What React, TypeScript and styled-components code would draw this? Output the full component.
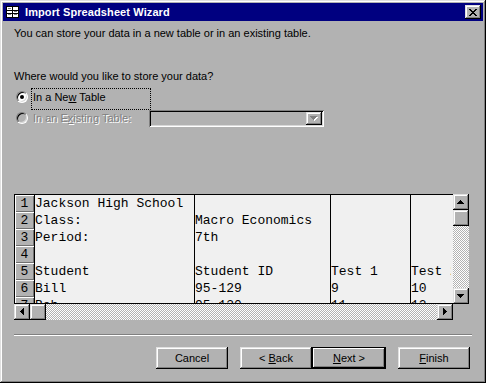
import React from 'react';
import styled, { createGlobalStyle, css } from 'styled-components';

const GRAY = '#b2b2b2';

const Global = createGlobalStyle`
  html, body { margin: 0; padding: 0; background: ${GRAY}; }
  #root { width: 486px; height: 383px; }
`;

const bevelOut = css`
  box-shadow: inset -1px -1px #000, inset 1px 1px #e0e0e0, inset -2px -2px #808080, inset 2px 2px #fff;
`;

const Window = styled.div`
  width: 486px;
  height: 383px;
  box-sizing: border-box;
  padding: 3px;
  background: ${GRAY};
  ${bevelOut}
  display: flex;
  flex-direction: column;
  font-family: "Liberation Sans", Arial, sans-serif;
  font-size: 11px;
  color: #000;
`;

const TitleBar = styled.div`
  height: 18px;
  flex: none;
  background: #000080;
  display: flex;
  align-items: center;
  padding: 0 2px 0 3px;
`;

const TitleIconBox = styled.svg`
  width: 13px;
  height: 12px;
  flex: none;
  margin-right: 6px;
`;

const TitleText = styled.span`
  color: #fff;
  font-weight: bold;
  font-size: 11px;
  flex: 1;
  letter-spacing: 0.1px;
`;

const CloseButton = styled.div`
  width: 16px;
  height: 14px;
  background: ${GRAY};
  ${bevelOut}
  display: flex;
  align-items: center;
  justify-content: center;
`;

const Body = styled.div`
  flex: 1;
  display: flex;
  flex-direction: column;
  padding: 0 13px 0 11px;
`;

const Line = styled.div<{ $top: number }>`
  margin-top: ${p => p.$top}px;
  line-height: 13px;
  height: 13px;
  white-space: nowrap;
`;

const OptionRow = styled.div<{ $h: number; $top?: number }>`
  display: flex;
  align-items: flex-start;
  height: ${p => p.$h}px;
  margin-top: ${p => p.$top ?? 0}px;
  padding-left: 2px;
`;

const Radio = styled.div<{ $checked?: boolean; $disabled?: boolean; $top: number }>`
  width: 12px;
  height: 12px;
  box-sizing: border-box;
  margin-top: ${p => p.$top}px;
  border-radius: 50%;
  border: 1px solid;
  border-color: #808080 #fff #fff #808080;
  background: ${p => (p.$disabled ? GRAY : '#fff')};
  box-shadow: inset 1px 1px #000, inset -1px -1px #d8d8d8;
  display: flex;
  align-items: center;
  justify-content: center;
  flex: none;
  &::after {
    content: '';
    display: ${p => (p.$checked ? 'block' : 'none')};
    width: 4px;
    height: 4px;
    border-radius: 50%;
    background: #000;
  }
`;

const OptionLabel = styled.div<{ $focused?: boolean; $disabled?: boolean; $h: number; $pt: number }>`
  margin-left: 3px;
  width: 120px;
  height: ${p => p.$h}px;
  box-sizing: border-box;
  border: 1px ${p => (p.$focused ? 'dotted #000' : 'solid transparent')};
  padding: ${p => p.$pt}px 0 0 1px;
  line-height: 13px;
  white-space: nowrap;
  flex: none;
  color: ${p => (p.$disabled ? '#808080' : '#000')};
  text-shadow: ${p => (p.$disabled ? '1px 1px 0 #fff' : 'none')};
`;

const Combo = styled.div`
  width: 175px;
  height: 17px;
  box-sizing: border-box;
  margin-left: -2px;
  background: ${GRAY};
  box-shadow: inset 1px 1px #808080, inset -1px -1px #fff, inset 2px 2px #000, inset -2px -2px #d8d8d8;
  display: flex;
  justify-content: flex-end;
  align-items: center;
  padding-right: 2px;
`;

const ScrollBtn = styled.div<{ $w?: number; $h?: number }>`
  width: ${p => p.$w ?? 16}px;
  height: ${p => p.$h ?? 16}px;
  box-sizing: border-box;
  background: ${GRAY};
  ${bevelOut}
  display: flex;
  align-items: center;
  justify-content: center;
  flex: none;
`;

const Sheet = styled.div`
  margin-top: 67px;
  display: grid;
  grid-template-columns: 439px 16px;
  grid-template-rows: 110px 16px;
  width: 455px;
`;

const Viewport = styled.div`
  box-sizing: border-box;
  border: 1px solid #000;
  border-right: none;
  background: #f0f0f0;
  overflow: hidden;
`;

const DataRow = styled.div`
  display: grid;
  grid-template-columns: 20px 159px 136px 80px 41px;
  height: 17px;
`;

const mono = css`
  font-family: "Liberation Mono", "Courier New", monospace;
  font-size: 13px;
  line-height: 17px;
`;

const RowHead = styled.div`
  ${mono}
  box-sizing: border-box;
  background: ${GRAY};
  border-right: 1px solid #000;
  box-shadow: inset 1px 1px #fff, inset -1px -1px #707070;
  text-align: center;
  color: #000;
`;

const Cell = styled.div<{ $divider?: boolean }>`
  ${mono}
  box-sizing: border-box;
  white-space: pre;
  overflow: hidden;
  border-left: ${p => (p.$divider ? '1px solid #000' : 'none')};
  color: #000;
`;

const Track = styled.div<{ $vertical?: boolean }>`
  display: flex;
  flex-direction: ${p => (p.$vertical ? 'column' : 'row')};
  justify-content: space-between;
  background: repeating-conic-gradient(${GRAY} 0 25%, #ffffff 0 50%) 0 0 / 2px 2px;
  overflow: hidden;
`;

const TrackStart = styled.div<{ $vertical?: boolean }>`
  display: flex;
  flex-direction: ${p => (p.$vertical ? 'column' : 'row')};
`;

const Corner = styled.div`
  background: ${GRAY};
`;

const Separator = styled.div`
  margin-top: 14px;
  width: 458px;
  height: 2px;
  box-sizing: border-box;
  border-top: 1px solid #808080;
  border-bottom: 1px solid #fff;
`;

const ButtonBar = styled.div`
  margin-top: 11px;
  display: flex;
  justify-content: flex-end;
  gap: 12px;
`;

const ButtonPair = styled.div`
  display: flex;
`;

const Button = styled.div<{ $default?: boolean }>`
  width: ${p => (p.$default ? 74 : 72)}px;
  height: 22px;
  box-sizing: border-box;
  background: ${GRAY};
  ${p =>
    p.$default
      ? css`
          border: 1px solid #000;
          box-shadow: inset -1px -1px #000, inset 1px 1px #fff, inset -2px -2px #808080;
        `
      : bevelOut}
  display: flex;
  align-items: center;
  justify-content: center;
  line-height: 13px;
  white-space: pre;
`;

type Dir = 'up' | 'down' | 'left' | 'right';

const arrowPaths: Record<Dir, { w: number; h: number; d: string }> = {
  up: { w: 7, h: 4, d: 'M3 0h1v1h-1z M2 1h3v1h-3z M1 2h5v1h-5z M0 3h7v1h-7z' },
  down: { w: 7, h: 4, d: 'M0 0h7v1h-7z M1 1h5v1h-5z M2 2h3v1h-3z M3 3h1v1h-1z' },
  left: { w: 4, h: 7, d: 'M3 0h1v7h-1z M2 1h1v5h-1z M1 2h1v3h-1z M0 3h1v1h-1z' },
  right: { w: 4, h: 7, d: 'M0 0h1v7h-1z M1 1h1v5h-1z M2 2h1v3h-1z M3 3h1v1h-1z' },
};

function Arrow({ dir, disabled }: { dir: Dir; disabled?: boolean }) {
  const a = arrowPaths[dir];
  return (
    <svg width={a.w + 1} height={a.h + 1} viewBox={`0 0 ${a.w + 1} ${a.h + 1}`} shapeRendering="crispEdges">
      {disabled && <path d={a.d} fill="#fff" transform="translate(1 1)" />}
      <path d={a.d} fill={disabled ? '#808080' : '#000'} />
    </svg>
  );
}

function TitleIcon() {
  return (
    <TitleIconBox viewBox="0 0 13 12" shapeRendering="crispEdges">
      <rect x="0" y="0" width="13" height="12" fill="#000" />
      <rect x="1" y="1" width="11" height="10" fill="#fff" />
      <rect x="1" y="4" width="11" height="1" fill="#000" />
      <rect x="1" y="7" width="11" height="1" fill="#000" />
      <rect x="6" y="1" width="1" height="10" fill="#000" />
      <rect x="2" y="2" width="3" height="1" fill="#808080" />
      <rect x="8" y="5" width="3" height="1" fill="#808080" />
      <rect x="2" y="8" width="3" height="1" fill="#808080" />
      <rect x="8" y="8" width="3" height="1" fill="#808080" />
    </TitleIconBox>
  );
}

function CloseGlyph() {
  return (
    <svg width="8" height="7" viewBox="0 0 8 7" shapeRendering="crispEdges">
      <path
        d="M0 0h2v1h-2z M6 0h2v1h-2z M1 1h2v1h-2z M5 1h2v1h-2z M2 2h4v1h-4z M3 3h2v1h-2z M2 4h4v1h-4z M1 5h2v1h-2z M5 5h2v1h-2z M0 6h2v1h-2z M6 6h2v1h-2z"
        fill="#000"
      />
    </svg>
  );
}

const rows: string[][] = [
  ['Jackson High School', '', '', ''],
  ['Class:', 'Macro Economics', '', ''],
  ['Period:', '7th', '', ''],
  ['', '', '', ''],
  ['Student', 'Student ID', 'Test 1', 'Test 2'],
  ['Bill', '95-129', '9', '10'],
  ['Bob', '95-130', '11', '12'],
];

export default function App() {
  return (
    <>
      <Global />
      <Window>
        <TitleBar>
          <TitleIcon />
          <TitleText>Import Spreadsheet Wizard</TitleText>
          <CloseButton>
            <CloseGlyph />
          </CloseButton>
        </TitleBar>
        <Body>
          <Line $top={6}>You can store your data in a new table or in an existing table.</Line>
          <Line $top={30}>Where would you like to store your data?</Line>
          <OptionRow $h={22} $top={5}>
            <Radio $checked $top={3} />
            <OptionLabel $focused $h={22} $pt={2}>
              In a Ne<u>w</u> Table
            </OptionLabel>
          </OptionRow>
          <OptionRow $h={17}>
            <Radio $disabled $top={2} />
            <OptionLabel $disabled $h={17} $pt={1}>
              In an E<u>x</u>isting Table:
            </OptionLabel>
            <Combo>
              <ScrollBtn $w={16} $h={13}>
                <Arrow dir="down" disabled />
              </ScrollBtn>
            </Combo>
          </OptionRow>
          <Sheet>
            <Viewport>
              {rows.map((r, i) => (
                <DataRow key={i}>
                  <RowHead>{i + 1}</RowHead>
                  {r.map((c, j) => (
                    <Cell key={j} $divider={j > 0}>
                      {c}
                    </Cell>
                  ))}
                </DataRow>
              ))}
            </Viewport>
            <Track $vertical>
              <TrackStart $vertical>
                <ScrollBtn>
                  <Arrow dir="up" />
                </ScrollBtn>
                <ScrollBtn />
              </TrackStart>
              <ScrollBtn>
                <Arrow dir="down" />
              </ScrollBtn>
            </Track>
            <Track>
              <TrackStart>
                <ScrollBtn>
                  <Arrow dir="left" />
                </ScrollBtn>
                <ScrollBtn />
              </TrackStart>
              <ScrollBtn>
                <Arrow dir="right" />
              </ScrollBtn>
            </Track>
            <Corner />
          </Sheet>
          <Separator />
          <ButtonBar>
            <Button>Cancel</Button>
            <ButtonPair>
              <Button>
                {'< '}
                <u>B</u>
                {'ack'}
              </Button>
              <Button $default>
                <u>N</u>
                {'ext >'}
              </Button>
            </ButtonPair>
            <Button>
              <u>F</u>
              {'inish'}
            </Button>
          </ButtonBar>
        </Body>
      </Window>
    </>
  );
}
